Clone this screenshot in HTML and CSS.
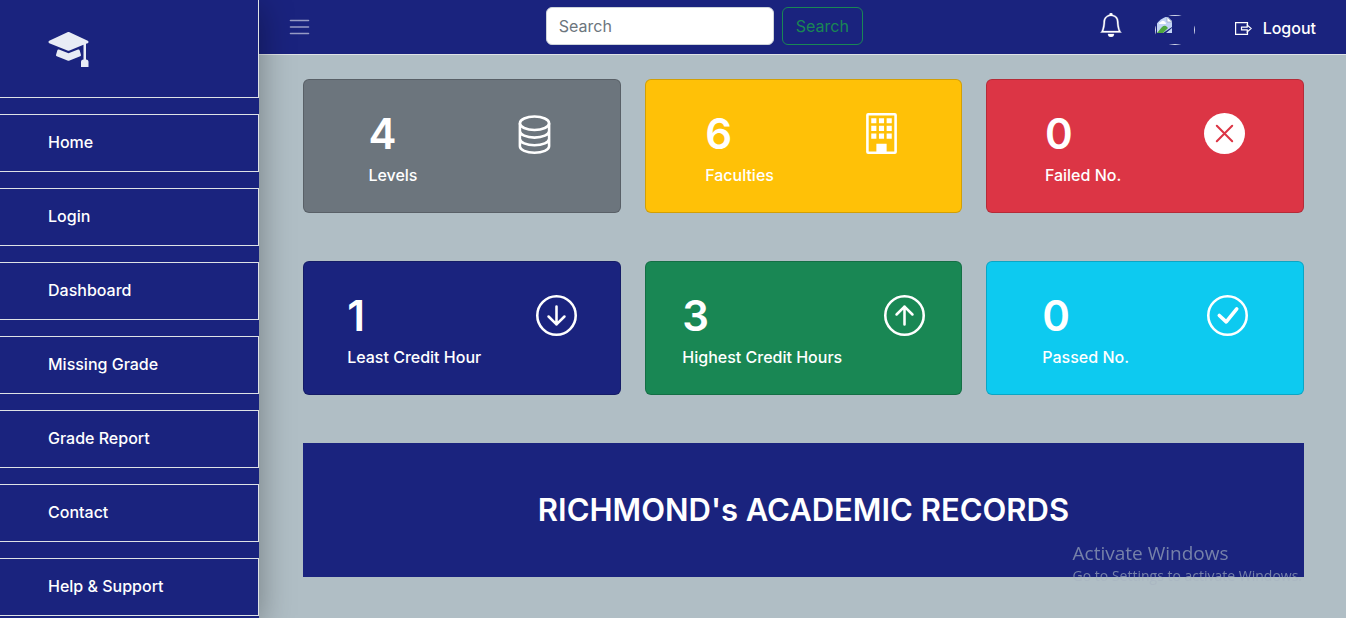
FILE: index.html
```html
<!DOCTYPE html>
<html lang="en">
<head>
<meta charset="utf-8">
<meta name="viewport" content="width=device-width, initial-scale=1">
<title>Richmond's Academic Records</title>
<link rel="stylesheet" href="styles.css">
</head>
<body>
<div class="layout">
  <nav class="sidebar" aria-label="Main">
    <a class="brand" href="#" aria-label="Academic Records">
      <svg class="brand-icon" viewBox="0 0 16 16" fill="currentColor" aria-hidden="true"><path d="M8.211 2.047a.5.5 0 0 0-.422 0l-7.5 3.5a.5.5 0 0 0 .025.917l7.5 3a.5.5 0 0 0 .372 0L14 7.14V13a1 1 0 0 0-1 1v2h3v-2a1 1 0 0 0-1-1V6.739l.686-.275a.5.5 0 0 0 .025-.917l-7.5-3.5Z"/><path d="M4.176 9.032a.5.5 0 0 0-.656.327l-.5 1.7a.5.5 0 0 0 .294.605l4.5 1.8a.5.5 0 0 0 .372 0l4.5-1.8a.5.5 0 0 0 .294-.605l-.5-1.7a.5.5 0 0 0-.656-.327L8 10.466 4.176 9.032Z"/></svg>
    </a>
    <a class="nav-item" href="#">Home</a>
    <a class="nav-item" href="#">Login</a>
    <a class="nav-item" href="#">Dashboard</a>
    <a class="nav-item" href="#">Missing Grade</a>
    <a class="nav-item" href="#">Grade Report</a>
    <a class="nav-item" href="#">Contact</a>
    <a class="nav-item" href="#">Help &amp; Support</a>
  </nav>

  <div class="page">
    <header class="topbar">
      <button class="icon-button menu-button" type="button" aria-label="Toggle menu">
        <svg class="menu-icon" viewBox="0 0 20 16" fill="none" stroke="currentColor" stroke-width="1.600" stroke-linecap="round" aria-hidden="true"><path d="M1 1.500h18M1 8h18M1 14.500h18"/></svg>
      </button>
      <form class="search" role="search">
        <input class="search-input" type="search" placeholder="Search" aria-label="Search">
        <button class="search-button" type="button">Search</button>
      </form>
      <div class="account">
        <button class="icon-button bell-button" type="button" aria-label="Notifications">
          <svg class="bell-icon" viewBox="0 0 16 16" fill="currentColor" stroke="currentColor" stroke-width=".2" aria-hidden="true"><path d="M8 16a2 2 0 0 0 2-2H6a2 2 0 0 0 2 2zM8 1.918l-.797.161A4.002 4.002 0 0 0 4 6c0 .628-.134 2.197-.459 3.742-.16.767-.376 1.566-.663 2.258h10.244c-.287-.692-.502-1.490-.663-2.258C12.134 8.197 12 6.628 12 6a4.002 4.002 0 0 0-3.203-3.920L8 1.917zM14.220 12c.223.447.481.801.780 1H1c.299-.199.557-.553.780-1C2.680 10.200 3 6.880 3 6c0-2.420 1.720-4.440 4.005-4.901a1 1 0 1 1 1.990 0A5.002 5.002 0 0 1 13 6c0 .880.320 4.200 1.220 6z"/></svg>
        </button>
        <a class="avatar" href="#" aria-label="Profile">
          <svg class="avatar-image" viewBox="0 0 40 30" aria-hidden="true">
            <defs><clipPath id="oval"><ellipse cx="20" cy="15" rx="20" ry="15"/></clipPath></defs>
            <g clip-path="url(#oval)">
              <rect x=".5" y=".5" width="39" height="29" fill="none" stroke="#d5d9ea"/>
              <path d="M2 2h11l4 4v6L8 18H2z" fill="#c3d4f5"/>
              <path d="M2 18l5-6q2-2 4-1l2 2-5 5z" fill="#4fa83d"/>
              <path d="M4 9q0-2 2-2 1-2 3-1t2 3z" fill="#fff"/>
              <path d="M12 2v5h5z" fill="#fff" stroke="#8998b5" stroke-width=".6"/>
              <path d="M11 18l6-5v5z" fill="#c3d4f5"/>
            </g>
          </svg>
        </a>
        <a class="logout" href="#">
          <svg class="logout-icon" viewBox="0 0 17 13" fill="none" stroke="currentColor" stroke-width="1.200" aria-hidden="true"><path d="M12.500 3.200V.6H.6v11.800h11.900V9.800"/><path d="M6.500 5.200h5.700V3l4 3.500-4 3.500V7.800H6.500z"/></svg>
          <span>Logout</span>
        </a>
      </div>
    </header>

    <main class="content">
      <section class="card card-gray">
        <div><p class="count">4</p><p class="label">Levels</p></div>
        <svg class="card-icon" viewBox="0 0 16 16" fill="none" stroke="currentColor" aria-hidden="true"><ellipse cx="8" cy="4" rx="5.700" ry="2.600"/><path d="M2.300 4v9c0 1.440 2.550 2.500 5.700 2.500s5.700-1.060 5.700-2.500V4M2.300 7c0 1.440 2.550 2.600 5.700 2.600s5.700-1.160 5.700-2.600M2.300 10c0 1.440 2.550 2.600 5.700 2.600s5.700-1.160 5.700-2.600"/></svg>
      </section>
      <section class="card card-yellow">
        <div><p class="count">6</p><p class="label">Faculties</p></div>
        <svg class="card-icon" viewBox="0 0 16 16" fill="currentColor" aria-hidden="true"><rect x="2.500" y=".5" width="11" height="15" rx=".3" fill="none" stroke="currentColor"/><path d="M4 2h2v2H4zM7 2h2v2H7zM10 2h2v2h-2zM4 5h2v2H4zM7 5h2v2H7zM10 5h2v2h-2zM4 8h2v2H4zM7 8h2v2H7zM10 8h2v2h-2zM6 12h4v4H6z"/></svg>
      </section>
      <section class="card card-red">
        <div><p class="count">0</p><p class="label">Failed No.</p></div>
        <svg class="card-icon" viewBox="0 0 16 16" aria-hidden="true"><circle cx="8" cy="8" r="8" fill="currentColor"/><path d="M5 5l6 6M11 5l-6 6" stroke="#dc3545" stroke-width=".8" stroke-linecap="round"/></svg>
      </section>
      <section class="card card-navy">
        <div><p class="count">1</p><p class="label">Least Credit Hour</p></div>
        <svg class="card-icon" viewBox="0 0 16 16" fill="none" stroke="currentColor" stroke-linecap="round" stroke-linejoin="round" aria-hidden="true"><circle cx="8" cy="8" r="7.500"/><path d="M8 4.500v7M4.900 8.400L8 11.500l3.100-3.100"/></svg>
      </section>
      <section class="card card-green">
        <div><p class="count">3</p><p class="label">Highest Credit Hours</p></div>
        <svg class="card-icon" viewBox="0 0 16 16" fill="none" stroke="currentColor" stroke-linecap="round" stroke-linejoin="round" aria-hidden="true"><circle cx="8" cy="8" r="7.500"/><path d="M8 11.500v-7M4.900 7.600L8 4.500l3.100 3.100"/></svg>
      </section>
      <section class="card card-cyan">
        <div><p class="count">0</p><p class="label">Passed No.</p></div>
        <svg class="card-icon" viewBox="0 0 16 16" fill="none" stroke="currentColor" stroke-linecap="round" stroke-linejoin="round" aria-hidden="true"><circle cx="8" cy="8" r="7.500"/><path d="M4.800 8L7.500 10.500l4.100-5.100" stroke-width="1.400"/></svg>
      </section>
      <div class="banner">
        <h1 class="banner-title">RICHMOND's ACADEMIC RECORDS</h1>
      </div>
    </main>
  </div>
</div>
<div class="watermark">
  <p class="watermark-title">Activate Windows</p>
  <p class="watermark-text">Go to Settings to activate Windows.</p>
</div>
</body>
</html>
```
FILE: styles.css
```css
:root {
  --navy: #1a237e;
  --line: #dee2e6;
}

* {
  box-sizing: border-box;
}

body {
  margin: 0;
  background: #b0bec5;
  color: #fff;
  font: 500 16px/24px Inter, "Liberation Sans", sans-serif;
}

p,
h1 {
  margin: 0;
}

a {
  color: inherit;
  text-decoration: none;
}

svg {
  display: block;
}

.layout {
  display: flex;
  min-height: 100vh;
}

.sidebar {
  position: relative;
  z-index: 1;
  flex: 0 0 259px;
  display: flex;
  flex-direction: column;
  gap: 16px;
  background: var(--navy);
  box-shadow: 0 8px 32px rgba(0, 0, 0, 0.36);
}

.brand {
  padding: 27px 48px 30px;
  border: solid var(--line);
  border-width: 0 1px 1px 0;
  color: #e8ecf5;
}

.brand-icon {
  width: 41px;
  height: 40px;
}

.nav-item {
  padding: 15px 48px 17px;
  border: 1px solid var(--line);
  border-left: 0;
}

.page {
  flex: 1;
  min-width: 0;
}

.topbar {
  display: flex;
  align-items: center;
  justify-content: space-between;
  padding: 7px 30px 9px;
  background: var(--navy);
  border-bottom: 1px solid var(--line);
}

.icon-button {
  padding: 0;
  border: 0;
  background: none;
  color: #fff;
}

.menu-button {
  padding-top: 2px;
  color: rgba(255, 255, 255, 0.55);
}

.menu-icon {
  width: 21px;
  height: 16px;
}

.search {
  display: flex;
  gap: 8px;
}

.search-input {
  width: 228px;
  height: 38px;
  padding: 6px 12px;
  border: 1px solid #ced4da;
  border-radius: 6px;
  background: #fff;
  color: #212529;
  font: inherit;
  font-weight: 400;
}

.search-input::placeholder {
  color: #6c757d;
  opacity: 1;
}

.search-button {
  height: 38px;
  padding: 0 13px;
  border: 1px solid #198754;
  border-radius: 6px;
  background: transparent;
  color: #198754;
  font: inherit;
  font-weight: 400;
}

.account {
  display: flex;
  align-items: center;
}

.bell-button {
  padding-bottom: 2px;
}

.bell-icon {
  width: 24px;
  height: 24px;
}

.avatar {
  margin: 7px 40px 0 32px;
}

.avatar-image {
  width: 40px;
  height: 30px;
}

.logout {
  display: flex;
  align-items: center;
  gap: 11px;
  padding-top: 4px;
}

.logout-icon {
  width: 17px;
  height: 13px;
}

.content {
  display: grid;
  grid-template-columns: repeat(3, minmax(0, 1fr));
  gap: 48px 24px;
  padding: 24px 42px 41px 44px;
}

.card {
  display: flex;
  align-items: flex-start;
  justify-content: space-around;
  padding: 33px 16px 25px;
  border: 1px solid rgba(0, 0, 0, 0.175);
  border-radius: 6px;
}

.card-gray {
  background: #6c757d;
}

.card-yellow {
  background: #ffc107;
}

.card-red {
  background: #dc3545;
}

.card-navy {
  background: var(--navy);
}

.card-green {
  background: #198754;
}

.card-cyan {
  background: #0dcaf0;
}

.count {
  margin-bottom: 8px;
  font-size: 42px;
  font-weight: 600;
  line-height: 42px;
}

.card-icon {
  width: 41px;
  height: 41px;
}

.banner {
  grid-column: 1 / -1;
  padding: 47px 16px;
  background: var(--navy);
  text-align: center;
}

.banner-title {
  font-size: 31px;
  font-weight: 600;
  line-height: 40px;
}

.watermark {
  position: fixed;
  right: 44px;
  bottom: 32px;
  z-index: 2;
  color: rgba(168, 180, 192, 0.65);
  font-family: "Open Sans", "Noto Sans", sans-serif;
  font-weight: 400;
  pointer-events: none;
}

.watermark-title {
  font-size: 19px;
  line-height: 26px;
}

.watermark-text {
  font-size: 14px;
  line-height: 20px;
}
```
